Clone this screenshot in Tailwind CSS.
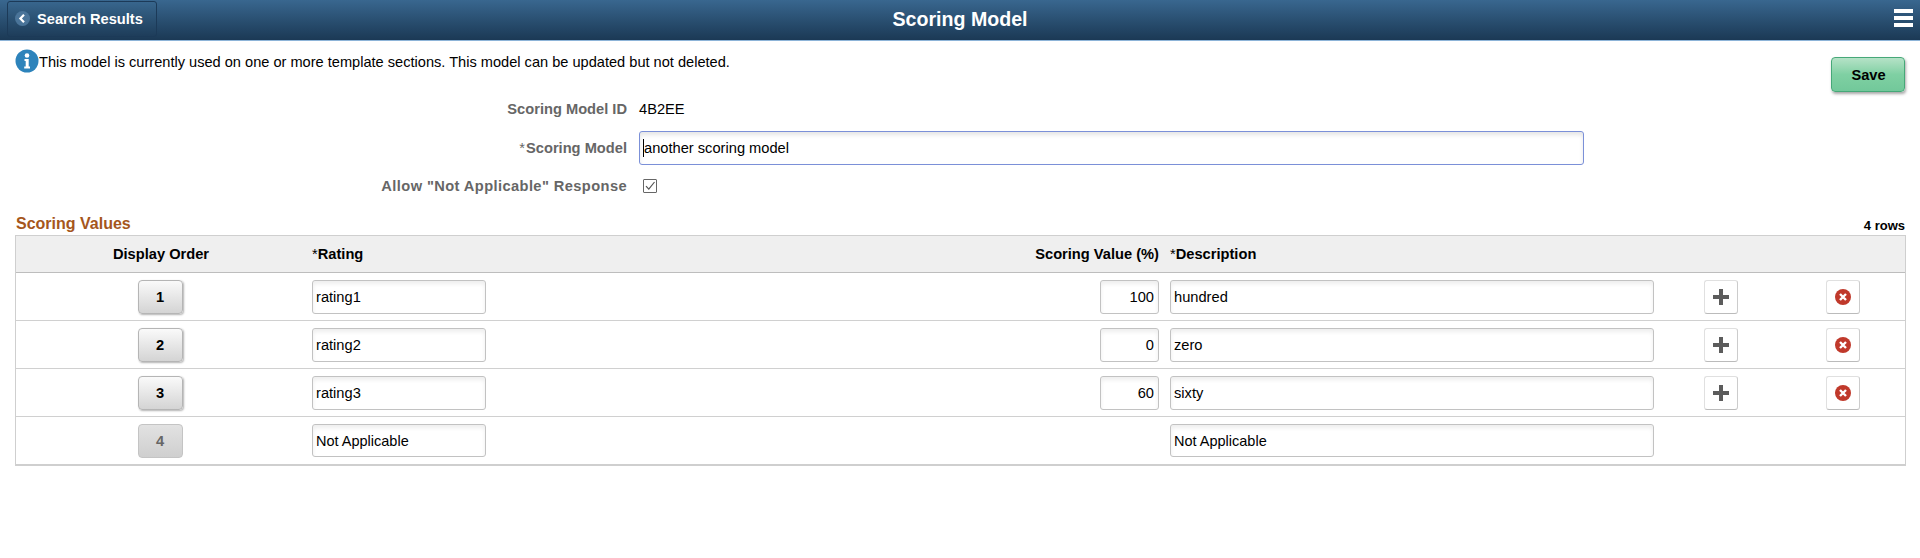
<!DOCTYPE html>
<html lang="en">
<head>
  <meta charset="UTF-8">
  <title>Scoring Model</title>
  <script src="https://cdn.jsdelivr.net/npm/@tailwindcss/browser@4"></script>
</head>
<body class="bg-white min-h-screen font-['Liberation_Sans',Arial,sans-serif] text-[14.67px] text-black">
  <!-- banner -->
  <header class="relative h-[41px] flex items-center justify-between pl-[7px] pr-[7px] bg-gradient-to-b from-[#39678f] to-[#1b3955] border-b border-[#8db4d8]">
    <button class="h-[36px] w-[150px] -mt-[3px] flex items-center gap-[7px] pl-[7px] rounded-[3px] border border-[#1c3a58] bg-gradient-to-b from-[#38668d] to-[#1e3d5a] text-white font-bold text-[14.67px]">
      <svg width="15" height="15" viewBox="0 0 15 15"><circle cx="7.5" cy="7.5" r="7.5" fill="#4a7499"/><path d="M9 3.8 5.4 7.5 9 11.2" fill="none" stroke="#fff" stroke-width="2.2"/></svg>
      Search Results
    </button>
    <h1 class="absolute left-0 right-0 text-center text-white font-bold text-[19.6px] pointer-events-none">Scoring Model</h1>
    <div class="flex flex-col gap-[3px] -mt-[4px] mr-[0px]">
      <span class="block w-[19px] h-[4px] bg-white"></span>
      <span class="block w-[19px] h-[4px] bg-white"></span>
      <span class="block w-[19px] h-[4px] bg-white"></span>
    </div>
  </header>

  <main class="px-[15px]">
    <div class="flex justify-between items-start">
      <div class="flex items-start pt-[8px]">
        <svg width="24" height="24" viewBox="0 0 24 24" class="shrink-0"><circle cx="12" cy="12" r="11.5" fill="#2d83bb"/><circle cx="12" cy="6.5" r="2.3" fill="#fff"/><path d="M9.5 10h4.2v7.5h1.3v2H9.2v-2h1.5V12H9.5z" fill="#fff"/></svg>
        <p class="pt-[3px] whitespace-nowrap text-[14.6px]">This model is currently used on one or more template sections. This model can be updated but not deleted.</p>
      </div>
      <button class="mt-[16px] h-[35px] w-[74px] rounded-[4px] border border-[#46a878] bg-gradient-to-b from-[#b5e2c7] via-[#7fd0a3] to-[#72c89a] shadow-[1px_2px_3px_rgba(0,0,0,0.35)] font-bold pl-[1px]">Save</button>
    </div>

    <!-- form rows -->
    <div class="grid grid-cols-[612px_1fr] gap-x-[12px] mt-[1px]">
      <div class="h-[32px] flex items-center justify-end font-bold text-[#666]">Scoring Model ID</div>
      <div class="h-[32px] flex items-center">4B2EE</div>
      <div class="h-[34px] mt-[6px] flex items-center justify-end font-bold text-[#666]"><span class="font-normal mr-[1px]">*</span>Scoring Model</div>
      <div class="relative mt-[6px]">
        <input value="another scoring model" class="w-[945px] h-[34px] px-[4px] rounded-[3px] border border-[#7b90d8] shadow-[inset_0_3px_4px_rgba(0,0,0,0.1)] outline-none">
        <span class="absolute left-[4px] top-[8px] w-px h-[18px] bg-black"></span>
      </div>
      <div class="h-[30px] mt-[6px] flex items-center justify-end font-bold text-[#666] tracking-[0.4px]">Allow "Not Applicable" Response</div>
      <div class="h-[30px] mt-[6px] flex items-center pl-[4px]">
        <span class="w-[14px] h-[14px] border border-[#666] rounded-[1px] flex items-center justify-center">
          <svg width="12" height="12" viewBox="0 0 12 12"><path d="M2 6.2 4.8 9.2 10.5 2" fill="none" stroke="#555" stroke-width="1.2"/></svg>
        </span>
      </div>
    </div>

    <!-- grid title -->
    <div class="flex justify-between items-end h-[27px] mt-[7px] pb-[3px]">
      <h2 class="font-bold text-[16px] leading-none text-[#a5561c] pl-px">Scoring Values</h2>
      <span class="font-bold text-[13px] leading-none">4 rows</span>
    </div>

    <div class="border border-[#cfcfcf] border-b-[2px] w-[1891px]">
      <div class="grid grid-cols-[296px_788px_70px_1fr] h-[37px] items-center bg-[#efefef] border-b border-[#bdbdbd] font-bold">
        <div class="text-center pr-[6px]">Display Order</div>
        <div><span class="font-normal">*</span>Rating</div>
        <div class="flex justify-end pr-[11px] whitespace-nowrap">Scoring Value (%)</div>
        <div><span class="font-normal">*</span>Description</div>
      </div>

      <div class="grid grid-cols-[296px_788px_70px_534px_122px_1fr] h-[48px] items-center border-b border-[#d0d0d0]">
        <div class="flex justify-center pr-[8px]"><button class="w-[45px] h-[34px] rounded-[4px] border border-[#b5b5b5] bg-gradient-to-b from-[#fafafa] to-[#d4d4d4] shadow-[1px_1px_2px_rgba(0,0,0,0.3)] font-bold">1</button></div>
        <div><input value="rating1" class="w-[174px] h-[34px] px-[3px] rounded-[3px] border border-[#c2c2c2] shadow-[inset_0_3px_4px_rgba(0,0,0,0.07)]"></div>
        <div><input value="100" class="w-[59px] h-[34px] px-[4px] text-right rounded-[3px] border border-[#c2c2c2] shadow-[inset_0_3px_4px_rgba(0,0,0,0.07)]"></div>
        <div><input value="hundred" class="w-[484px] h-[34px] px-[3px] rounded-[3px] border border-[#c2c2c2] shadow-[inset_0_3px_4px_rgba(0,0,0,0.07)]"></div>
        <div><button class="w-[34px] h-[34px] flex items-center justify-center rounded-[3px] border border-[#e0e0e0] border-b-[#bbb] border-r-[#ccc]"><svg width="16" height="16" viewBox="0 0 16 16"><path d="M6 0h4v6h6v4h-6v6H6v-6H0V6h6z" fill="#5c5c5c"/></svg></button></div>
        <div><button class="w-[34px] h-[34px] flex items-center justify-center rounded-[3px] border border-[#e0e0e0] border-b-[#bbb] border-r-[#ccc]"><svg width="16" height="16" viewBox="0 0 16 16"><circle cx="8" cy="8" r="8" fill="#c0392b"/><path d="M5 5 11 11M11 5 5 11" stroke="#fff" stroke-width="2.4"/></svg></button></div>
      </div>

      <div class="grid grid-cols-[296px_788px_70px_534px_122px_1fr] h-[48px] items-center border-b border-[#d0d0d0]">
        <div class="flex justify-center pr-[8px]"><button class="w-[45px] h-[34px] rounded-[4px] border border-[#b5b5b5] bg-gradient-to-b from-[#fafafa] to-[#d4d4d4] shadow-[1px_1px_2px_rgba(0,0,0,0.3)] font-bold">2</button></div>
        <div><input value="rating2" class="w-[174px] h-[34px] px-[3px] rounded-[3px] border border-[#c2c2c2] shadow-[inset_0_3px_4px_rgba(0,0,0,0.07)]"></div>
        <div><input value="0" class="w-[59px] h-[34px] px-[4px] text-right rounded-[3px] border border-[#c2c2c2] shadow-[inset_0_3px_4px_rgba(0,0,0,0.07)]"></div>
        <div><input value="zero" class="w-[484px] h-[34px] px-[3px] rounded-[3px] border border-[#c2c2c2] shadow-[inset_0_3px_4px_rgba(0,0,0,0.07)]"></div>
        <div><button class="w-[34px] h-[34px] flex items-center justify-center rounded-[3px] border border-[#e0e0e0] border-b-[#bbb] border-r-[#ccc]"><svg width="16" height="16" viewBox="0 0 16 16"><path d="M6 0h4v6h6v4h-6v6H6v-6H0V6h6z" fill="#5c5c5c"/></svg></button></div>
        <div><button class="w-[34px] h-[34px] flex items-center justify-center rounded-[3px] border border-[#e0e0e0] border-b-[#bbb] border-r-[#ccc]"><svg width="16" height="16" viewBox="0 0 16 16"><circle cx="8" cy="8" r="8" fill="#c0392b"/><path d="M5 5 11 11M11 5 5 11" stroke="#fff" stroke-width="2.4"/></svg></button></div>
      </div>

      <div class="grid grid-cols-[296px_788px_70px_534px_122px_1fr] h-[48px] items-center border-b border-[#d0d0d0]">
        <div class="flex justify-center pr-[8px]"><button class="w-[45px] h-[34px] rounded-[4px] border border-[#b5b5b5] bg-gradient-to-b from-[#fafafa] to-[#d4d4d4] shadow-[1px_1px_2px_rgba(0,0,0,0.3)] font-bold">3</button></div>
        <div><input value="rating3" class="w-[174px] h-[34px] px-[3px] rounded-[3px] border border-[#c2c2c2] shadow-[inset_0_3px_4px_rgba(0,0,0,0.07)]"></div>
        <div><input value="60" class="w-[59px] h-[34px] px-[4px] text-right rounded-[3px] border border-[#c2c2c2] shadow-[inset_0_3px_4px_rgba(0,0,0,0.07)]"></div>
        <div><input value="sixty" class="w-[484px] h-[34px] px-[3px] rounded-[3px] border border-[#c2c2c2] shadow-[inset_0_3px_4px_rgba(0,0,0,0.07)]"></div>
        <div><button class="w-[34px] h-[34px] flex items-center justify-center rounded-[3px] border border-[#e0e0e0] border-b-[#bbb] border-r-[#ccc]"><svg width="16" height="16" viewBox="0 0 16 16"><path d="M6 0h4v6h6v4h-6v6H6v-6H0V6h6z" fill="#5c5c5c"/></svg></button></div>
        <div><button class="w-[34px] h-[34px] flex items-center justify-center rounded-[3px] border border-[#e0e0e0] border-b-[#bbb] border-r-[#ccc]"><svg width="16" height="16" viewBox="0 0 16 16"><circle cx="8" cy="8" r="8" fill="#c0392b"/><path d="M5 5 11 11M11 5 5 11" stroke="#fff" stroke-width="2.4"/></svg></button></div>
      </div>

      <div class="grid grid-cols-[296px_788px_70px_534px_122px_1fr] h-[47px] items-center">
        <div class="flex justify-center pr-[8px]"><button class="w-[45px] h-[34px] rounded-[4px] border border-[#c4c4c4] bg-gradient-to-b from-[#e2e2e2] to-[#cfcfcf] font-bold text-[#666]">4</button></div>
        <div><input value="Not Applicable" class="w-[174px] h-[33px] px-[3px] rounded-[3px] border border-[#c2c2c2] shadow-[inset_0_3px_4px_rgba(0,0,0,0.07)] text-[14.5px]"></div>
        <div></div>
        <div><input value="Not Applicable" class="w-[484px] h-[33px] px-[3px] rounded-[3px] border border-[#c2c2c2] shadow-[inset_0_3px_4px_rgba(0,0,0,0.07)] text-[14.5px]"></div>
        <div></div>
        <div></div>
      </div>
    </div>
  </main>
</body>
</html>
